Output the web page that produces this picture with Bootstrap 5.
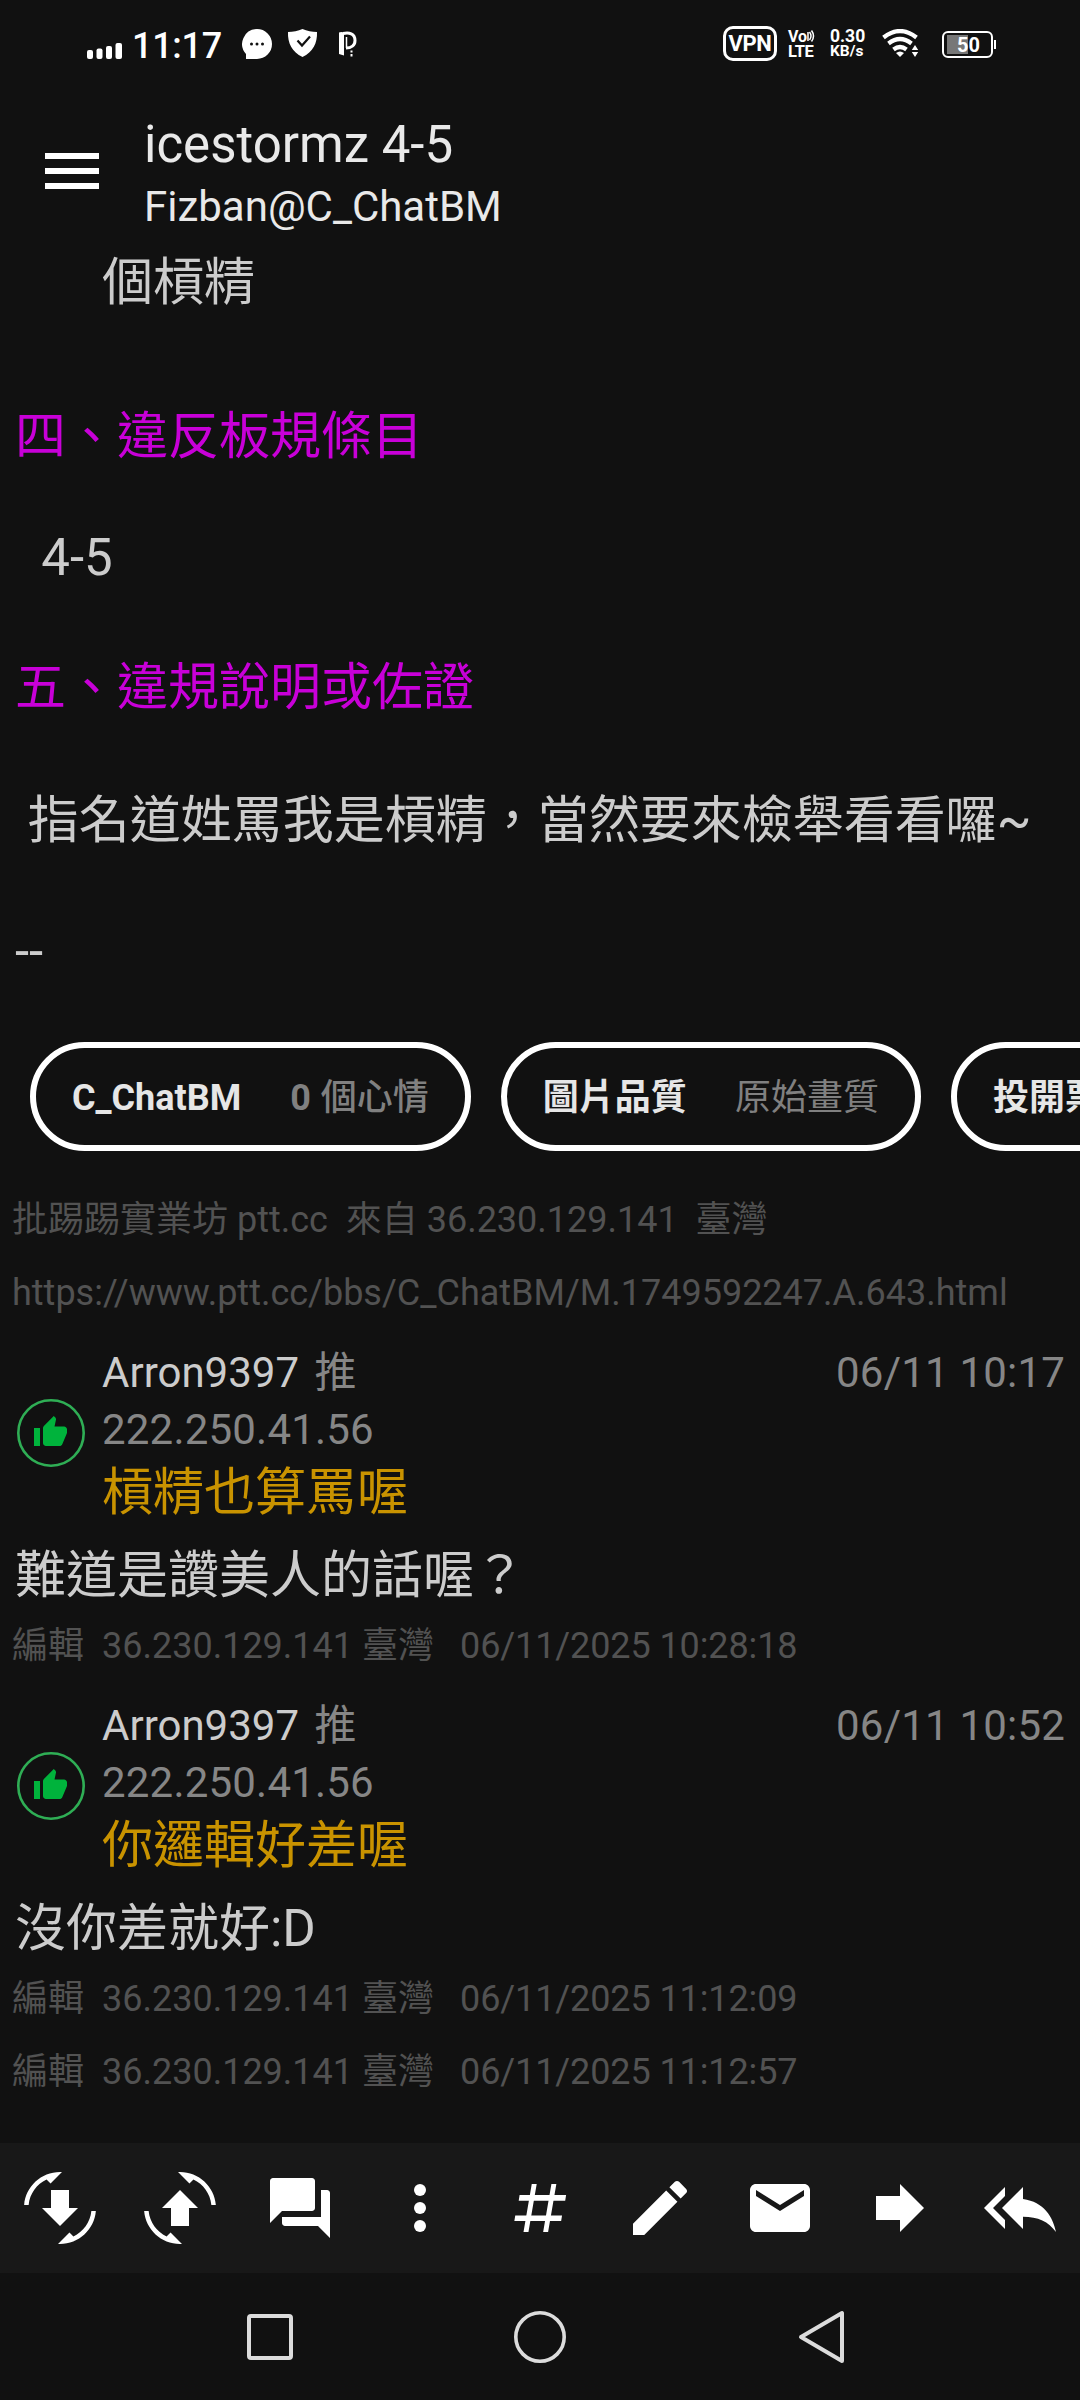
<!DOCTYPE html>
<html lang="zh-TW">
<head>
<meta charset="utf-8">
<meta name="viewport" content="width=device-width, initial-scale=1">
<title>icestormz 4-5</title>
<link href="https://cdn.jsdelivr.net/npm/bootstrap@5.3.0/dist/css/bootstrap.min.css" rel="stylesheet">
<style>
  body { background:#111; color:#ccc; font-family:Roboto,"Noto Sans CJK TC",sans-serif; font-size:51px; }
  .screen { width:1080px; height:2400px; }
  svg { display:block; flex:none; }
  /* status bar */
  .statusbar { height:80px; padding:7px 84px 0 87px; color:#fff; }
  .signal { margin-top:14px; }
  .clock { width:110px; font-size:36px; font-weight:500; line-height:69px; margin:5px 0 0 9px; letter-spacing:-.3px; }
  .vpn { width:54px; height:35px; border:3px solid #fff; border-radius:10px; font-size:22px; font-weight:700; line-height:30px; letter-spacing:-.3px; }
  .two-line { flex:none; font-size:16px; font-weight:700; line-height:15px; }
  .volte { width:28px; margin-left:11px; }
  .lte { font-size:16.5px; letter-spacing:-.4px; }
  .rate { width:36px; margin-left:14px; font-size:17.5px; line-height:16px; }
  .rate-unit { font-size:15.5px; line-height:15px; }
  .wifi { margin-left:16px; }
  .power { flex:none; width:51px; height:27px; margin:2px 0 0 23px; border:2px solid #fff; border-radius:6px; font-size:20px; font-weight:700; line-height:24px; padding-left:2px; background:linear-gradient(90deg,#777 21px,transparent 21px) 3px 2px/42px 19px no-repeat; }
  .power-tip { width:2px; height:9px; background:#fff; margin:2px 0 0 1px; }
  /* header */
  .topbar { padding:34px 45px 0; height:173px; color:#e9e9e9; }
  .head-title { line-height:61px; }
  .head-sub { font-size:42px; line-height:63px; }
  .burger { margin-top:39px; margin-right:45px; }
  /* article */
  .ln { line-height:60px; white-space:pre; padding-left:15px; }
  .indent { padding-left:102px; }
  .clause { padding-left:16px; }
  .section { color:#c800d8; margin-top:94px; }
  .gap-a { margin-top:61px; } .gap-b { margin-top:70px; } .gap-c { margin-top:73px; } .gap-d { margin-top:71px; }
  .chips { gap:30px; margin:60px 0 32px 30px; }
  .chip { flex:none; height:109px; border:6px solid #fff; border-radius:55px; font-size:36px; font-weight:700; color:#e6e6e6; padding:3px 36px 0; gap:49px; }
  .chip + .chip { gap:48px; }
  .chip .dim { color:#808080; }
  .chip .mid { font-weight:500; margin-left:1px; }
  .meta { font-size:36px; line-height:73px; white-space:pre; padding:1px 0 0 12px; height:73px; color:#525252; }
  .comment { margin-top:15px; padding:0 15px 0 17px; }
  .thumb { margin:55px 17px 0 0; }
  .who { font-size:42px; line-height:57px; }
  .dim2 { color:#868686; letter-spacing:.2px; }
  .push { margin-left:5px; }
  .say { color:#c99300; line-height:69px; }
  .reply { line-height:67px; padding-left:15px; margin-top:15px; }
  .edit-tag { width:90px; }
  .edit-ip { width:358px; }
  .edit-date { letter-spacing:-.1px; }
  .toolbar { height:130px; background:#181818; }
  .toolbar div { width:120px; }
  .sysnav { height:127px; }
</style>
<script src="https://cdn.jsdelivr.net/npm/bootstrap@5.3.0/dist/js/bootstrap.bundle.min.js"></script>
</head>
<body class="m-0">
<div class="screen d-flex flex-column overflow-hidden">

  <div class="statusbar d-flex align-items-center">
    <svg class="signal" width="36" height="16" viewBox="0 0 36 16" fill="#fff"><rect y="7" width="6" height="9" rx="2"/><rect x="9.500" y="5.500" width="6" height="10.500" rx="2"/><rect x="19" y="3" width="6" height="13" rx="2"/><rect x="28.500" width="6.500" height="16" rx="2"/></svg>
    <span class="clock">11:17</span>
    <svg width="118" height="30" viewBox="0 0 118 30">
      <path d="M15 0a15 15 0 1 1 0 30H4v-5A15 15 0 0 1 15 0z" fill="#fff"/>
      <g fill="#111"><circle cx="9.500" cy="15" r="1.500"/><circle cx="15" cy="15" r="1.500"/><circle cx="20.500" cy="15" r="1.500"/></g>
      <path d="M60.500 0C56 2 51 3 46 3c-.5 11 4 20 14.500 25C71 23 75.500 14 75 3 70 3 65 2 60.500 0z" fill="#fff"/>
      <path d="M55.500 11.500l4.500 5 8-9" fill="none" stroke="#111" stroke-width="2.200"/>
      <path d="M97 3.500q2-1 5 0v23l-5-1.500z" fill="#fff"/>
      <path d="M101 4.500c6-1.500 12 0 12 7 0 5-4 7.500-9 7.500" fill="none" stroke="#fff" stroke-width="3"/>
      <path d="M104.500 8v11" fill="none" stroke="#fff" stroke-width="1.500"/>
      <path d="M108.500 21.500h2v2h-2zM108.500 25h2v2.500h-2z" fill="#fff"/>
    </svg>
    <div class="vpn text-center flex-shrink-0 ms-auto">VPN</div>
    <div class="two-line volte">
      <div class="d-flex">Vo<svg width="8" height="14" viewBox="0 0 8 14" fill="none" stroke="#fff" stroke-width="1.500"><path d="M1 3v9M2.500 3q3 4 0 8M4.500 1.500q4 5.500 0 11"/></svg></div>
      <div class="lte">LTE</div>
    </div>
    <div class="two-line rate"><div>0.30</div><div class="rate-unit">KB/s</div></div>
    <svg class="wifi" width="37" height="29" viewBox="0 0 37 29" fill="none" stroke="#fff" stroke-width="4.200"><path d="M1.500 8.500Q18 -4.500 34.500 8.500M6.500 14.500Q18 5.500 29.500 14.500M11.500 20.500Q18 15.500 24.500 20.500"/><path d="M18 28l-4-4q4-3 8 0z" fill="#fff" stroke="none"/><path d="M33 16l3.200 5h-6.400zM33 28l3.200-5h-6.400z" fill="#fff" stroke="none"/></svg>
    <div class="power text-center">50</div><div class="power-tip"></div>
  </div>

  <header class="topbar d-flex">
    <svg class="burger" width="54" height="36" viewBox="0 0 54 36" fill="#fff"><path d="M0 0h54v6H0zM0 15h54v6H0zM0 30h54v6H0z"/></svg>
    <div><div class="head-title">icestormz 4-5</div><div class="head-sub">Fizban@C_ChatBM</div></div>
  </header>

  <main class="flex-grow-1 overflow-hidden">
    <div class="ln indent">個槓精</div>
    <div class="ln section">四、違反板規條目</div>
    <div class="ln clause gap-a">  4-5</div>
    <div class="ln section gap-b">五、違規說明或佐證</div>
    <div class="ln gap-c"> 指名道姓罵我是槓精，當然要來檢舉看看囉~</div>
    <div class="ln gap-d">--</div>

    <div class="chips d-flex">
      <div class="chip d-flex align-items-center"><span>C_ChatBM</span><span class="dim">0 <span class="mid">個心情</span></span></div>
      <div class="chip d-flex align-items-center"><span>圖片品質</span><span class="dim fw-normal">原始畫質</span></div>
      <div class="chip d-flex align-items-center"><span>投開票</span></div>
    </div>

    <div class="meta">批踢踢實業坊 ptt.cc  來自 36.230.129.141  臺灣</div>
    <div class="meta">https://www.ptt.cc/bbs/C_ChatBM/M.1749592247.A.643.html</div>

    <div class="comment d-flex">
      <svg class="thumb" width="68" height="68" viewBox="0 0 68 68"><circle cx="34" cy="34" r="32.700" fill="none" stroke="#2fae55" stroke-width="2.600"/><path transform="translate(15.500 15.500) scale(1.500)" fill="#00b33c" d="M1 21h4V9H1v12zm22-11c0-1.100-.9-2-2-2h-6.310l.95-4.570.03-.32c0-.41-.17-.79-.44-1.060L14.170 1 7.590 7.590C7.220 7.950 7 8.450 7 9v10c0 1.100.9 2 2 2h9c.83 0 1.540-.5 1.840-1.220l3.020-7.050c.09-.23.14-.47.14-.73v-2z"/></svg>
      <div class="flex-grow-1">
        <div class="who d-flex justify-content-between"><span>Arron9397 <span class="dim2 push">推</span></span><span class="dim2">06/11 10:17</span></div>
        <div class="who dim2">222.250.41.56</div>
        <div class="say">槓精也算罵喔</div>
      </div>
    </div>
    <div class="reply">難道是讚美人的話喔？</div>
    <div class="meta d-flex"><span class="edit-tag">編輯</span><span class="edit-ip">36.230.129.141 臺灣</span><span class="edit-date">06/11/2025 10:28:18</span></div>

    <div class="comment d-flex">
      <svg class="thumb" width="68" height="68" viewBox="0 0 68 68"><circle cx="34" cy="34" r="32.700" fill="none" stroke="#2fae55" stroke-width="2.600"/><path transform="translate(15.500 15.500) scale(1.500)" fill="#00b33c" d="M1 21h4V9H1v12zm22-11c0-1.100-.9-2-2-2h-6.310l.95-4.570.03-.32c0-.41-.17-.79-.44-1.060L14.170 1 7.590 7.590C7.220 7.950 7 8.450 7 9v10c0 1.100.9 2 2 2h9c.83 0 1.540-.5 1.840-1.220l3.020-7.050c.09-.23.14-.47.14-.73v-2z"/></svg>
      <div class="flex-grow-1">
        <div class="who d-flex justify-content-between"><span>Arron9397 <span class="dim2 push">推</span></span><span class="dim2">06/11 10:52</span></div>
        <div class="who dim2">222.250.41.56</div>
        <div class="say">你邏輯好差喔</div>
      </div>
    </div>
    <div class="reply">沒你差就好:D</div>
    <div class="meta d-flex"><span class="edit-tag">編輯</span><span class="edit-ip">36.230.129.141 臺灣</span><span class="edit-date">06/11/2025 11:12:09</span></div>
    <div class="meta d-flex"><span class="edit-tag">編輯</span><span class="edit-ip">36.230.129.141 臺灣</span><span class="edit-date">06/11/2025 11:12:57</span></div>
  </main>

  <div class="toolbar d-flex align-items-center flex-shrink-0">
    <div class="d-flex justify-content-center"><svg width="72" height="72" viewBox="0 0 24 24" fill="#fff"><path d="M9 6h6v6h3l-6 6-6-6h3z"/><path transform="matrix(-1 0 0 1 24 0)" d="M16.480 2.520c3.270 1.550 5.610 4.720 5.970 8.480h1.500C23.440 4.840 18.290 0 12 0l-.66.03 3.810 3.810 1.330-1.320zM7.520 21.480C4.250 19.940 1.910 16.760 1.550 13H.05C.56 19.160 5.710 24 12 24l.66-.03-3.810-3.810-1.330 1.320z"/></svg></div>
    <div class="d-flex justify-content-center"><svg width="72" height="72" viewBox="0 0 24 24" fill="#fff"><path d="M12 6l6 6h-3v6H9v-6H6z"/><path d="M16.480 2.520c3.270 1.550 5.610 4.720 5.970 8.480h1.500C23.440 4.840 18.290 0 12 0l-.66.03 3.810 3.810 1.330-1.320zM7.520 21.480C4.250 19.940 1.910 16.760 1.550 13H.05C.56 19.160 5.710 24 12 24l.66-.03-3.810-3.810-1.330 1.320z"/></svg></div>
    <div class="d-flex justify-content-center"><svg width="72" height="72" viewBox="0 0 24 24" fill="#fff"><path d="M21 6h-2v9H6v2c0 .55.45 1 1 1h11l4 4V7c0-.55-.45-1-1-1zm-4 6V3c0-.55-.45-1-1-1H3c-.55 0-1 .45-1 1v14l4-4h10c.55 0 1-.45 1-1z"/></svg></div>
    <div class="d-flex justify-content-center"><svg width="72" height="72" viewBox="0 0 24 24" fill="#fff"><circle cx="12" cy="6" r="2"/><circle cx="12" cy="12" r="2"/><circle cx="12" cy="18" r="2"/></svg></div>
    <div class="d-flex justify-content-center"><svg width="72" height="72" viewBox="0 0 24 24" fill="#fff"><path d="M5.200 7.700h15.500l-.3 1.850H4.900zM3.750 14.500h15.600l-.3 1.850H3.450z"/><path d="M9.250 4h1.650L8.150 20H6.500zM15.800 4h1.650L14.700 20h-1.650z"/></svg></div>
    <div class="d-flex justify-content-center"><svg width="72" height="72" viewBox="0 0 24 24" fill="#fff"><path d="M3 17.250V21h3.750L17.810 9.940l-3.750-3.750L3 17.250zM20.710 7.040c.39-.39.39-1.020 0-1.410l-2.340-2.340c-.39-.39-1.020-.39-1.410 0l-1.830 1.830 3.750 3.750 1.830-1.830z"/></svg></div>
    <div class="d-flex justify-content-center"><svg width="72" height="72" viewBox="0 0 24 24" fill="#fff"><path d="M20 4H4c-1.100 0-2 .9-2 2v12c0 1.100.9 2 2 2h16c1.100 0 2-.9 2-2V6c0-1.100-.9-2-2-2zm0 4l-8 5-8-5V6l8 5 8-5v2z"/></svg></div>
    <div class="d-flex justify-content-center"><svg width="72" height="72" viewBox="0 0 24 24" fill="#fff"><path d="M4 8h8V4l8 8-8 8v-4H4z"/></svg></div>
    <div class="d-flex justify-content-center"><svg width="72" height="72" viewBox="0 0 24 24" fill="#fff"><path d="M7 8V5l-7 7 7 7v-3l-4-4 4-4zm6 1V5l-7 7 7 7v-4.100c5 0 8.500 1.600 11 5.100-1-5-4-10-11-11z"/></svg></div>
  </div>

  <div class="sysnav d-flex align-items-center justify-content-center flex-shrink-0">
    <svg width="640" height="56" viewBox="0 0 640 56" fill="none" stroke="#dcdcdc" stroke-width="4" stroke-linejoin="round"><rect x="29" y="7" width="42" height="42" rx="2"/><circle cx="320" cy="28" r="24.200" stroke-width="3.600"/><path d="M622 4v48l-41-24z"/></svg>
  </div>
</div>
</body>
</html>
